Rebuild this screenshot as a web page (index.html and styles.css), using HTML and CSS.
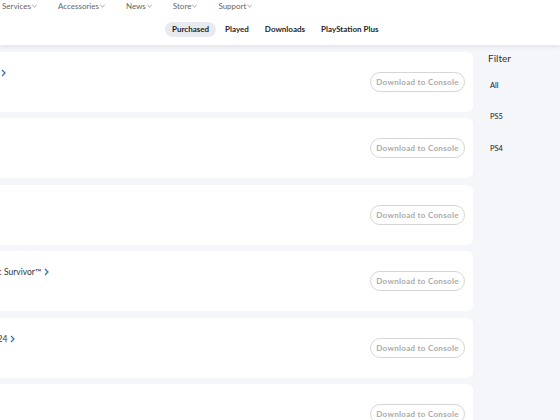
FILE: index.html
```html
<!DOCTYPE html>
<html lang="en">
<head>
    <meta charset="UTF-8">
    <meta name="viewport" content="width=device-width, initial-scale=1.0">
    <title>Game Library</title>
    <link rel="stylesheet" href="styles.css">
</head>
<body>
    <header class="site-header">
        <nav class="topnav">
            <a class="nav-item">Services<svg class="caret" viewBox="0 0 6 4"><path d="M0.5 0.8 L3 3.2 L5.5 0.8"/></svg></a>
            <a class="nav-item">Accessories<svg class="caret" viewBox="0 0 6 4"><path d="M0.5 0.8 L3 3.2 L5.5 0.8"/></svg></a>
            <a class="nav-item">News<svg class="caret" viewBox="0 0 6 4"><path d="M0.5 0.8 L3 3.2 L5.5 0.8"/></svg></a>
            <a class="nav-item">Store<svg class="caret" viewBox="0 0 6 4"><path d="M0.5 0.8 L3 3.2 L5.5 0.8"/></svg></a>
            <a class="nav-item">Support<svg class="caret" viewBox="0 0 6 4"><path d="M0.5 0.8 L3 3.2 L5.5 0.8"/></svg></a>
        </nav>
        <div class="tabs">
            <a class="tab active">Purchased</a>
            <a class="tab">Played</a>
            <a class="tab">Downloads</a>
            <a class="tab">PlayStation Plus</a>
        </div>
    </header>

    <main class="page">
        <section class="library">
            <div class="game-card">
                <div class="thumb"></div>
                <div class="game-info"><a class="game-title">Spider-Man 2<svg class="more" viewBox="0 0 5 8"><path d="M1 1 L4 4 L1 7"/></svg></a></div>
                <button class="btn-download">Download to Console</button>
            </div>
            <div class="game-card">
                <div class="thumb"></div>
                <div class="game-info"><a class="game-title">Returnal<svg class="more" viewBox="0 0 5 8"><path d="M1 1 L4 4 L1 7"/></svg></a></div>
                <button class="btn-download">Download to Console</button>
            </div>
            <div class="game-card">
                <div class="thumb"></div>
                <div class="game-info"><a class="game-title">Stray<svg class="more" viewBox="0 0 5 8"><path d="M1 1 L4 4 L1 7"/></svg></a></div>
                <button class="btn-download">Download to Console</button>
            </div>
            <div class="game-card">
                <div class="thumb"></div>
                <div class="game-info"><a class="game-title">Star Wars Jedi: Survivor™<svg class="more" viewBox="0 0 5 8"><path d="M1 1 L4 4 L1 7"/></svg></a></div>
                <button class="btn-download">Download to Console</button>
            </div>
            <div class="game-card">
                <div class="thumb"></div>
                <div class="game-info"><a class="game-title">Madden NFL 24<svg class="more" viewBox="0 0 5 8"><path d="M1 1 L4 4 L1 7"/></svg></a></div>
                <button class="btn-download">Download to Console</button>
            </div>
            <div class="game-card">
                <div class="thumb"></div>
                <div class="game-info"><a class="game-title">Deathloop<svg class="more" viewBox="0 0 5 8"><path d="M1 1 L4 4 L1 7"/></svg></a></div>
                <button class="btn-download">Download to Console</button>
            </div>
        </section>

        <aside class="filters">
            <h2 class="filter-title">Filter</h2>
            <ul class="filter-list">
                <li>All</li>
                <li>PS5</li>
                <li>PS4</li>
            </ul>
        </aside>
    </main>
</body>
</html>
```

FILE: styles.css
```css
body { margin: 0; background: #f5f6fa; font-family: Lato, "Liberation Sans", sans-serif; color: #1f1f1f; overflow: hidden; }

/* header */
.site-header { position: relative; z-index: 2; height: 45px; background: #fff; box-shadow: 0 2px 5px rgba(0, 0, 0, 0.08); }
.topnav { display: flex; gap: 21px; height: 12px; padding-left: 2px; }
.nav-item { display: flex; align-items: center; font-size: 8px; line-height: 12px; color: #666; }
.caret { width: 5px; height: 4px; margin-left: 1px; fill: none; stroke: #777; stroke-width: 0.9; }
.tabs { display: flex; gap: 2px; margin-top: 10px; padding-left: 165px; }
.tab { height: 15px; line-height: 15px; padding: 0 7px; border-radius: 8px; font-size: 8px; font-weight: 700; color: #1f1f1f; }
.tab.active { background: #e8eaef; }

/* game list (scrolled sideways, the thumbnails sit off to the left) */
.page { display: flex; padding-top: 6.5px; }
.library { flex: 0 0 588px; margin-left: -115px; display: flex; flex-direction: column; gap: 6.5px; }
.game-card { height: 60px; display: flex; align-items: center; padding: 0 8px 0 10px; background: #fff; border-radius: 6px; box-sizing: border-box; }
.thumb { width: 40px; height: 40px; margin-right: 12px; border-radius: 4px; background: #e9ebf0; }
.game-info { flex: 1; align-self: flex-start; display: flex; padding-top: 15px; }
.game-title { display: flex; align-items: center; font-size: 8.5px; line-height: 12px; color: #333; }
.more { width: 5px; height: 8px; margin-left: 3px; fill: none; stroke: #2d6db5; stroke-width: 1.2; }
.btn-download { width: 95px; height: 20px; padding: 0; border: 1px solid #d6d6d6; border-radius: 10px; background: #fff; font-family: inherit; font-size: 8px; font-weight: 700; letter-spacing: 0.3px; color: #ababab; }

/* filter sidebar */
.filters { flex: 1; padding-left: 15px; }
.filter-title { margin: 0; font-size: 10px; line-height: 12px; font-weight: 400; color: #333; }
.filter-list { list-style: none; margin: 10px 0 0; padding: 0 0 0 2px; }
.filter-list li { height: 31.5px; line-height: 23px; font-size: 7.5px; color: #222; }
```
